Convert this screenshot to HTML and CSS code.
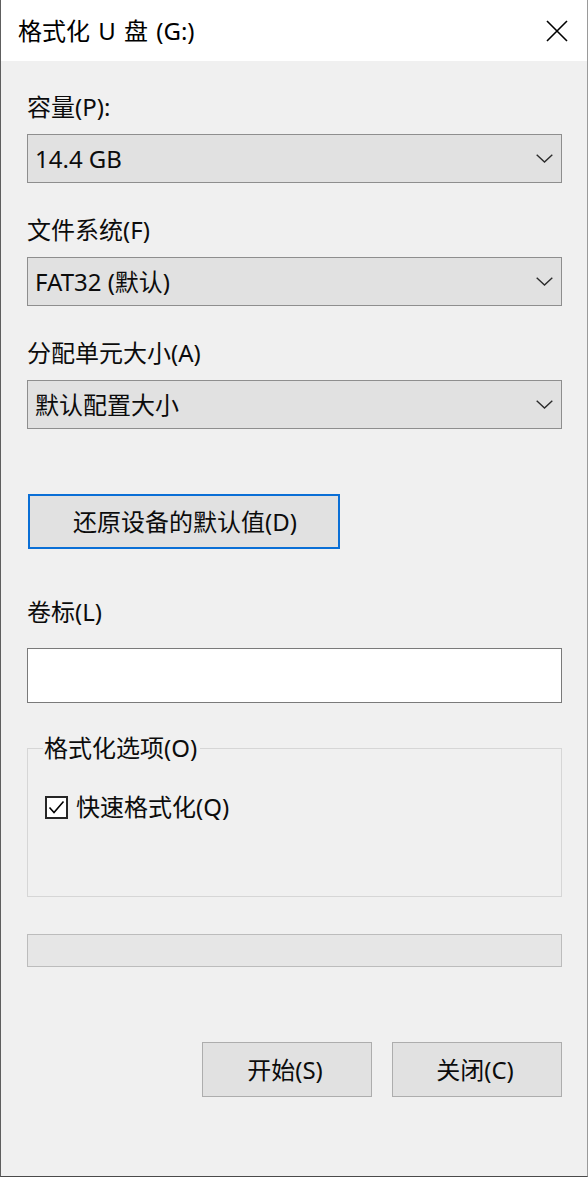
FILE: index.html
```html
<!DOCTYPE html>
<html lang="zh-CN">
<head>
<meta charset="utf-8">
<title>格式化 U 盘 (G:)</title>
<link rel="stylesheet" href="styles.css">
</head>
<body>
<div class="window">
  <div class="titlebar">
    <span class="title">格式化 U 盘 (G:)</span>
    <svg class="close" width="22" height="22" viewBox="0 0 22 22"><path d="M1 1 L21 21 M21 1 L1 21" stroke="#000" stroke-width="1.6" fill="none"/></svg>
  </div>
  <div class="content">
    <div class="label first">容量(P):</div>
    <div class="combo"><span>14.4 GB</span><svg class="chev" width="17" height="9" viewBox="0 0 17 9"><polyline points="0.7,0.7 8.5,8 16.3,0.7" fill="none" stroke="#2b2b2b" stroke-width="1.4"/></svg></div>

    <div class="label">文件系统(F)</div>
    <div class="combo"><span>FAT32 (默认)</span><svg class="chev" width="17" height="9" viewBox="0 0 17 9"><polyline points="0.7,0.7 8.5,8 16.3,0.7" fill="none" stroke="#2b2b2b" stroke-width="1.4"/></svg></div>

    <div class="label">分配单元大小(A)</div>
    <div class="combo"><span>默认配置大小</span><svg class="chev" width="17" height="9" viewBox="0 0 17 9"><polyline points="0.7,0.7 8.5,8 16.3,0.7" fill="none" stroke="#2b2b2b" stroke-width="1.4"/></svg></div>

    <div class="btn restore">还原设备的默认值(D)</div>

    <div class="label volume">卷标(L)</div>
    <div class="textbox"></div>

    <fieldset class="group">
      <legend>格式化选项(O)</legend>
      <div class="check-row">
        <span class="checkbox"><svg width="19" height="19" viewBox="0 0 19 19"><polyline points="2.5,9.5 7,14.5 16.5,3.5" fill="none" stroke="#000" stroke-width="1.6"/></svg></span>
        <span>快速格式化(Q)</span>
      </div>
    </fieldset>

    <div class="progress"></div>

    <div class="actions">
      <div class="btn action">开始(S)</div>
      <div class="btn action">关闭(C)</div>
    </div>
  </div>
</div>
</body>
</html>
```

FILE: styles.css
```css
* { box-sizing: border-box; }

html, body {
  margin: 0;
  padding: 0;
  background: #ffffff;
}

body {
  font-family: "Noto Sans", "Noto Sans CJK SC", sans-serif;
  font-size: 24px;
  color: #0c0c0c;
}

.window {
  width: 588px;
  height: 1177px;
  background: #f0f0f0;
  border-left: 1px solid #5e5e5e;
  border-right: 1px solid #9a9a9a;
  border-bottom: 1px solid #4a4a4a;
  display: flex;
  flex-direction: column;
}

.titlebar {
  height: 61px;
  background: #ffffff;
  display: flex;
  align-items: center;
  justify-content: space-between;
  padding: 0 19px 0 17px;
  flex: none;
}

.title {
  font-size: 24px;
  line-height: 32px;
  color: #000;
  word-spacing: 2px;
}

.close { display: block; }

.content {
  padding: 0 25px 0 26px;
  display: flex;
  flex-direction: column;
}

.label {
  line-height: 32px;
  margin: 31px 0 11px;
  white-space: nowrap;
}

.label.first { margin-top: 30px; }

.combo {
  height: 49px;
  background: #e1e1e1;
  border: 1px solid #8e8e8e;
  display: flex;
  align-items: center;
  justify-content: space-between;
  padding: 0 8px 0 7px;
}

.combo span { line-height: 32px; }

.chev { display: block; }

.btn {
  display: flex;
  align-items: center;
  justify-content: center;
  background: #e1e1e1;
  border: 1px solid #adadad;
  line-height: 32px;
  white-space: nowrap;
}

.restore {
  width: 312px;
  height: 55px;
  margin: 65px 0 0 1px;
  border: 2px solid #0a6fd6;
  padding-left: 2px;
}

.label.volume {
  margin: 47px 0 20px;
}

.textbox {
  height: 55px;
  background: #ffffff;
  border: 1px solid #7a7a7a;
}

.group {
  margin: 29px 0 0;
  height: 165px;
  border: 1px solid #d6d6d6;
  padding: 0 0 0 15px;
  min-width: 0;
}

.group legend {
  padding: 0 3px 0 1px;
  line-height: 32px;
}

.check-row {
  display: flex;
  align-items: center;
  gap: 8px;
  margin: 27px 0 0 2px;
  line-height: 32px;
}

.checkbox {
  width: 23px;
  height: 23px;
  border: 2px solid #262626;
  background: #ffffff;
  display: flex;
  align-items: center;
  justify-content: center;
  flex: none;
}

.checkbox svg { display: block; }

.progress {
  margin-top: 37px;
  height: 33px;
  background: #e6e6e6;
  border: 1px solid #bcbcbc;
}

.actions {
  margin-top: 75px;
  display: flex;
  justify-content: flex-end;
  gap: 20px;
}

.action {
  width: 170px;
  height: 55px;
  padding-right: 4px;
}
```
